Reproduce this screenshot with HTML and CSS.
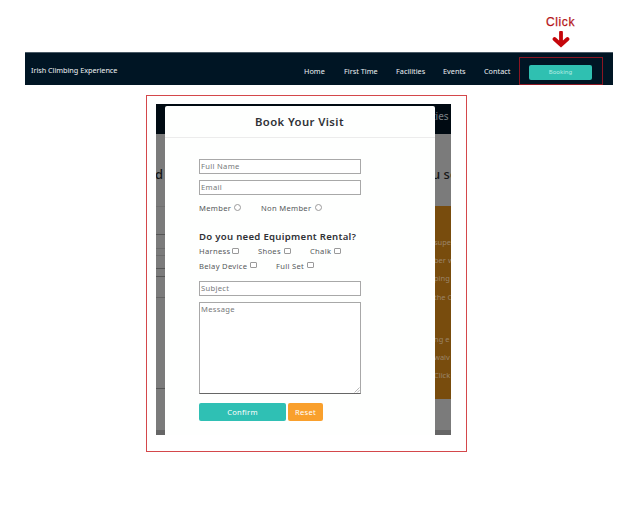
FILE: index.html
```html
<!DOCTYPE html>
<html lang="en">
<head>
<meta charset="utf-8">
<title>Irish Climbing Experience</title>
<link rel="stylesheet" href="styles.css">
</head>
<body>
<div class="hint">
  <span class="hint-text">Click</span>
  <svg class="hint-arrow" width="18" height="17" viewBox="0 0 18 17"><path d="M9 1.5V13M2.5 8L9 14L15.5 8" fill="none" stroke="#c5060b" stroke-width="3.8" stroke-linecap="round"/></svg>
</div>
<nav class="nav">
  <span class="brand">Irish Climbing Experience</span>
  <div class="links">
    <a class="l-home">Home</a><a class="l-first">First Time</a><a class="l-fac">Facilities</a><a class="l-events">Events</a><a class="l-contact">Contact</a>
  </div>
  <div class="nav-mark"><button class="booking">Booking</button></div>
</nav>
<main class="frame">
  <div class="scene">
    <div class="page-top"><span>ties</span></div>
    <div class="page-title"><span class="title-start">d</span><span class="title-end">u so</span></div>
    <div class="page-cols">
      <div class="col-left"><i class="g0"></i><i class="g1"></i><i class="g2"></i><i class="g3"></i><i class="g4"></i><i class="g5"></i><i class="g6"></i><i class="g7"></i></div>
      <div class="col-right">
        <p>supe</p><p>ber w</p><p>ping</p><p>the C</p><p class="gap"></p><p>ng e</p><p>waiv</p><p>Click</p>
      </div>
    </div>
    <div class="page-end"></div>
    <section class="modal">
      <h2 class="modal-title"><span>Book Your Visit</span></h2>
      <form class="form">
        <div class="field"><span>Full Name</span></div>
        <div class="field second"><span>Email</span></div>
        <div class="choices member">
          <label class="c-member"><span>Member</span><i class="radio"></i></label>
          <label class="c-non"><span>Non Member</span><i class="radio"></i></label>
        </div>
        <h3 class="question"><span>Do you need Equipment Rental?</span></h3>
        <div class="choices">
          <label class="c-harness"><span>Harness</span><i class="check"></i></label>
          <label class="c-shoes"><span>Shoes</span><i class="check"></i></label>
          <label class="c-chalk"><span>Chalk</span><i class="check"></i></label>
        </div>
        <div class="choices">
          <label class="c-belay"><span>Belay Device</span><i class="check"></i></label>
          <label class="c-full"><span>Full Set</span><i class="check"></i></label>
        </div>
        <div class="field subject"><span>Subject</span></div>
        <div class="field message"><span>Message</span>
          <svg class="grip" width="6" height="6" viewBox="0 0 6 6"><path d="M0.5 5.5L5.5 0.5M3.2 5.5L5.5 3.2" stroke="#999" stroke-width=".7"/></svg>
        </div>
        <div class="actions"><button class="btn confirm">Confirm</button><button class="btn reset">Reset</button></div>
      </form>
    </section>
  </div>
</main>
</body>
</html>
```
FILE: styles.css
```css
* { box-sizing: border-box; }
body { margin: 0; width: 636px; height: 508px; overflow: hidden; background: #fff; font-family: "Noto Sans", "Open Sans", sans-serif; }
h2, h3, p { margin: 0; }
button { border: 0; padding: 0; font-family: inherit; color: #fff; }
span, a { white-space: nowrap; }

.hint { height: 52px; padding: 15px 0 0 545px; width: 576px; display: flex; flex-direction: column; align-items: center; }
.hint-text { font: 12px/15px "Liberation Sans", sans-serif; letter-spacing: .6px; color: #b5161a; -webkit-text-stroke: .25px #b5161a; }
.hint-arrow { margin-top: 1px; flex: none; }

.nav { margin-left: 25px; width: 588px; height: 33px; border-top: 1px solid #4a5a66; background: #001524; color: #eef2f4; display: flex; padding-left: 6px; font-size: 7.3px; line-height: 10px; }
.brand { width: 273px; padding-top: 12px; letter-spacing: -.04px; }
.links { width: 215px; padding-top: 13px; display: flex; }
.l-home { width: 40px; }
.l-first { width: 52px; }
.l-fac { width: 47px; }
.l-events { width: 41px; }
.nav-mark { width: 84px; height: 28px; margin-top: 4px; border: 1px solid #8c1522; padding: 7px 0 0 9px; display: flex; }
.booking { width: 63px; height: 15px; border-radius: 2px; background: #2fc0b1; font-size: 6px; line-height: 15px; color: #b8eee5; }

.frame { margin: 10px 0 0 146px; width: 321px; height: 357px; border: 1px solid #d4484b; padding: 8px 0 0 9px; }
.scene { position: relative; width: 295px; height: 331px; overflow: hidden; background: #7b7b7b; }
.page-top { height: 30px; background: #000a12; color: #7b8084; font-size: 10px; line-height: 24px; padding-left: 276px; }
.page-title { height: 72px; padding: 28px 0 0; display: flex; color: #151515; font-size: 13px; line-height: 24px; font-weight: 500; }
.title-start { flex: none; width: 276px; text-indent: -1px; }
.title-end { letter-spacing: .2px; word-spacing: -.5px; }
.page-cols { display: flex; justify-content: space-between; height: 193px; }
.col-left { width: 9px; display: flex; flex-direction: column; }
.col-left i { display: block; border-bottom: 1px solid #555; }
.g0 { height: 1px; opacity: .3; }
.g1 { height: 28px; }
.g2 { height: 14px; opacity: .4; }
.g3 { height: 7px; opacity: .4; }
.g4 { height: 13px; }
.g5 { height: 8px; }
.g6 { height: 21px; opacity: .6; }
.g7 { height: 91px; }
.col-right { width: 16px; background: #784c0d; padding-top: 27px; overflow: hidden; color: #9a8468; font-size: 7.5px; }
.col-right p { height: 18.2px; line-height: 18px; white-space: nowrap; text-indent: -1px; }
.col-right .gap { height: 24px; }
.page-end { height: 36px; border-bottom: 5px solid #666; }

.modal { position: absolute; left: 9px; top: 2px; width: 270px; height: 329px; background: #fefffe; border-radius: 2px 2px 0 0; }
.modal-title { height: 32px; border-bottom: 1px solid #ececec; padding-left: 90px; font-size: 11.3px; line-height: 31px; font-weight: 600; color: #303236; letter-spacing: .4px; }
.form { padding: 21px 0 0 34px; color: #55585a; font-size: 7.6px; letter-spacing: .3px; }
.field { width: 162px; height: 15px; border: 1px solid #a8a8a8; padding-left: 1px; line-height: 13px; color: #77797b; background: #fff; }
.second { margin-top: 6px; }
.choices { height: 14.5px; display: flex; line-height: 14px; }
.choices label { display: flex; align-items: center; justify-content: space-between; }
.member { margin-top: 6px; height: 29px; align-items: flex-start; }
.radio, .check { width: 7px; height: 6px; border: 1px solid #9a9a9a; background: #fff; flex: none; }
.radio { height: 7px; border-radius: 50%; margin-top: -1px; }
.check { border-radius: 1px; margin-top: -1px; }
.c-member { width: 42px; margin-right: 20px; }
.c-non { width: 61px; }
.c-harness { width: 40px; margin-right: 19px; }
.c-shoes { width: 33px; margin-right: 19px; }
.c-chalk { width: 31px; }
.c-belay { width: 58px; margin-right: 19px; }
.c-full { width: 38px; }
.question { height: 14px; font-size: 9.6px; line-height: 14px; font-weight: 600; color: #303236; letter-spacing: .28px; }
.subject { margin-top: 8px; }
.message { position: relative; margin-top: 6px; height: 92px; border-bottom-color: #666; }
.grip { position: absolute; right: 0; bottom: 0; }
.actions { display: flex; gap: 2px; margin-top: 9px; }
.btn { height: 18px; border-radius: 2px; font-size: 7.6px; line-height: 18px; letter-spacing: .25px; }
.confirm { width: 87px; background: #2fc0b4; }
.reset { width: 35px; background: #f9a02c; }
```
